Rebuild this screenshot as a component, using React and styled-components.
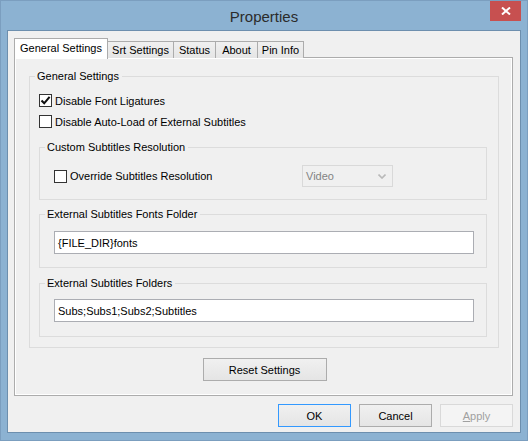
import React from 'react';
import styled, { createGlobalStyle } from 'styled-components';

const GlobalStyle = createGlobalStyle`
  html, body {
    margin: 0;
    padding: 0;
    background: #8cb2d2;
  }
  body {
    font-family: "Liberation Sans", Arial, sans-serif;
    font-size: 11px;
    color: #000;
  }
  * { box-sizing: border-box; }
`;

const Window = styled.div`
  width: 528px;
  height: 441px;
  display: flex;
  flex-direction: column;
  padding: 0 6px 7px;
  background: #8cb2d2;
  border: 1px solid #7b9ebf;
`;

const TitleBar = styled.div`
  height: 29px;
  margin: 0 -6px;
  padding: 0 6px;
  display: grid;
  grid-template-columns: 1fr auto 1fr;
  align-items: center;
`;

const Title = styled.div`
  grid-column: 2;
  font-size: 15px;
  color: #2b2b2b;
  margin-top: 1px;
`;

const CloseButton = styled.div`
  grid-column: 3;
  justify-self: end;
  align-self: start;
  width: 31px;
  height: 20px;
  background: #c75050;
  display: flex;
  align-items: center;
  justify-content: center;
`;

const Client = styled.div`
  flex: 1;
  display: flex;
  flex-direction: column;
  background: #f0f0f0;
  border: 1px solid #6d8fae;
  padding: 7px 7px 5px 6px;
`;

const TabStrip = styled.div`
  height: 20px;
  display: flex;
  align-items: flex-start;
  margin-bottom: -1px;
  position: relative;
  z-index: 1;
`;

const Tab = styled.div`
  width: ${(p) => p.$w}px;
  height: ${(p) => (p.$active ? 21 : 17)}px;
  margin-top: ${(p) => (p.$active ? 0 : 3)}px;
  margin-left: ${(p) => (p.$first ? 0 : -1)}px;
  border: 1px solid #acacac;
  border-bottom: none;
  background: ${(p) => (p.$active ? '#ffffff' : 'linear-gradient(#f0f0f0, #e5e5e5)')};
  position: relative;
  z-index: ${(p) => (p.$active ? 2 : 1)};
  display: flex;
  justify-content: center;
  padding-top: ${(p) => (p.$active ? 3 : 2)}px;
  line-height: 13px;
  white-space: nowrap;
`;

const Panel = styled.div`
  flex: 1;
  display: flex;
  flex-direction: column;
  align-items: stretch;
  border: 1px solid #acacac;
  box-shadow: inset 0 0 0 1px #ffffff;
  background: #f0f0f0;
  padding: 11px 13px 13px 14px;
`;

const Group = styled.fieldset`
  margin: ${(p) => p.$m || '0'};
  padding: 0;
  min-width: 0;
  border: 1px solid #dcdcdc;
  border-radius: 0;
`;

const GroupBody = styled.div`
  padding: ${(p) => p.$p};
`;

const Legend = styled.legend`
  margin-left: 5px;
  padding: 0 3px 0 2px;
  line-height: 14px;
  height: 14px;
`;

const CheckRow = styled.label`
  height: ${(p) => p.$h || 21}px;
  display: flex;
  align-items: center;
  gap: 3px;
  white-space: nowrap;
`;

const Box = styled.span`
  width: 13px;
  height: 13px;
  flex: none;
  border: 1px solid #333333;
  background: #ffffff;
  display: flex;
  align-items: center;
  justify-content: center;
`;

const ResolutionRow = styled.div`
  display: grid;
  grid-template-columns: 248px 91px;
  align-items: center;
  height: 22px;
`;

const Combo = styled.div`
  height: 22px;
  border: 1px solid #d9d9d9;
  background: #f0f0f0;
  color: #838383;
  display: flex;
  align-items: center;
  justify-content: space-between;
  padding: 0 6px 0 3px;
`;

const TextInput = styled.div`
  height: 23px;
  border: 1px solid #abadb3;
  background: #ffffff;
  display: flex;
  align-items: center;
  padding-left: 3px;
  white-space: nowrap;
`;

const Button = styled.div`
  width: ${(p) => p.$w || 73}px;
  height: 23px;
  border: 1px solid ${(p) => (p.$default ? '#3399ff' : p.$disabled ? '#d9d9d9' : '#acacac')};
  background: ${(p) => (p.$disabled ? '#f4f4f4' : 'linear-gradient(#f0f0f0, #e5e5e5)')};
  color: ${(p) => (p.$disabled ? '#a0a0a0' : '#000')};
  display: flex;
  align-items: center;
  justify-content: center;
  white-space: nowrap;
  u { text-decoration-thickness: 1px; text-underline-offset: 1px; }
`;

const ResetWrap = styled.div`
  display: flex;
  justify-content: center;
  margin-top: 10px;
  padding-left: 1px;
`;

const ButtonRow = styled.div`
  display: flex;
  justify-content: flex-end;
  gap: 8px;
  margin-top: 8px;
`;

const Check = () => (
  <svg width="11" height="11" viewBox="0 0 11 11">
    <path d="M1.5 5.5 L4.2 8.3 L9.6 1.8" fill="none" stroke="#111" strokeWidth="2.1" />
  </svg>
);

const CloseX = () => (
  <svg width="10" height="8" viewBox="0 0 10 8">
    <path d="M1 0.5 L9 7.5 M9 0.5 L1 7.5" stroke="#fff" strokeWidth="2" />
  </svg>
);

const Chevron = () => (
  <svg width="8" height="5" viewBox="0 0 8 5">
    <path d="M0.5 0.5 L4 4 L7.5 0.5" fill="none" stroke="#b9b9b9" strokeWidth="1.6" />
  </svg>
);

const CheckBox = ({ checked, children, h }) => (
  <CheckRow $h={h}>
    <Box>{checked && <Check />}</Box>
    <span>{children}</span>
  </CheckRow>
);

const tabs = [
  { name: 'General Settings', w: 94 },
  { name: 'Srt Settings', w: 67 },
  { name: 'Status', w: 43 },
  { name: 'About', w: 43 },
  { name: 'Pin Info', w: 47 },
];

export default function App() {
  return (
    <>
      <GlobalStyle />
      <Window>
        <TitleBar>
          <Title>Properties</Title>
          <CloseButton>
            <CloseX />
          </CloseButton>
        </TitleBar>
        <Client>
          <TabStrip>
            {tabs.map((t, i) => (
              <Tab key={t.name} $w={t.w} $active={i === 0} $first={i === 0}>
                {t.name}
              </Tab>
            ))}
          </TabStrip>
          <Panel>
            <Group>
              <Legend>General Settings</Legend>
              <GroupBody $p="7px 11px 10px 9px">
                <CheckBox checked>Disable Font Ligatures</CheckBox>
                <CheckBox>Disable Auto-Load of External Subtitles</CheckBox>

                <Group $m="8px 0 0 0">
                  <Legend>Custom Subtitles Resolution</Legend>
                  <GroupBody $p="11px 12px 12px 14px">
                    <ResolutionRow>
                      <CheckBox h={22}>Override Subtitles Resolution</CheckBox>
                      <Combo>
                        <span>Video</span>
                        <Chevron />
                      </Combo>
                    </ResolutionRow>
                  </GroupBody>
                </Group>

                <Group $m="7px 0 0 0">
                  <Legend>External Subtitles Fonts Folder</Legend>
                  <GroupBody $p="10px 12px 13px 14px">
                    <TextInput>{'{FILE_DIR}fonts'}</TextInput>
                  </GroupBody>
                </Group>

                <Group $m="8px 0 0 0">
                  <Legend>External Subtitles Folders</Legend>
                  <GroupBody $p="9px 12px 14px 14px">
                    <TextInput>Subs;Subs1;Subs2;Subtitles</TextInput>
                  </GroupBody>
                </Group>
              </GroupBody>
            </Group>
            <ResetWrap>
              <Button $w={124}>Reset Settings</Button>
            </ResetWrap>
          </Panel>
          <ButtonRow>
            <Button $default>OK</Button>
            <Button>Cancel</Button>
            <Button $disabled>
              <span><u>A</u>pply</span>
            </Button>
          </ButtonRow>
        </Client>
      </Window>
    </>
  );
}
